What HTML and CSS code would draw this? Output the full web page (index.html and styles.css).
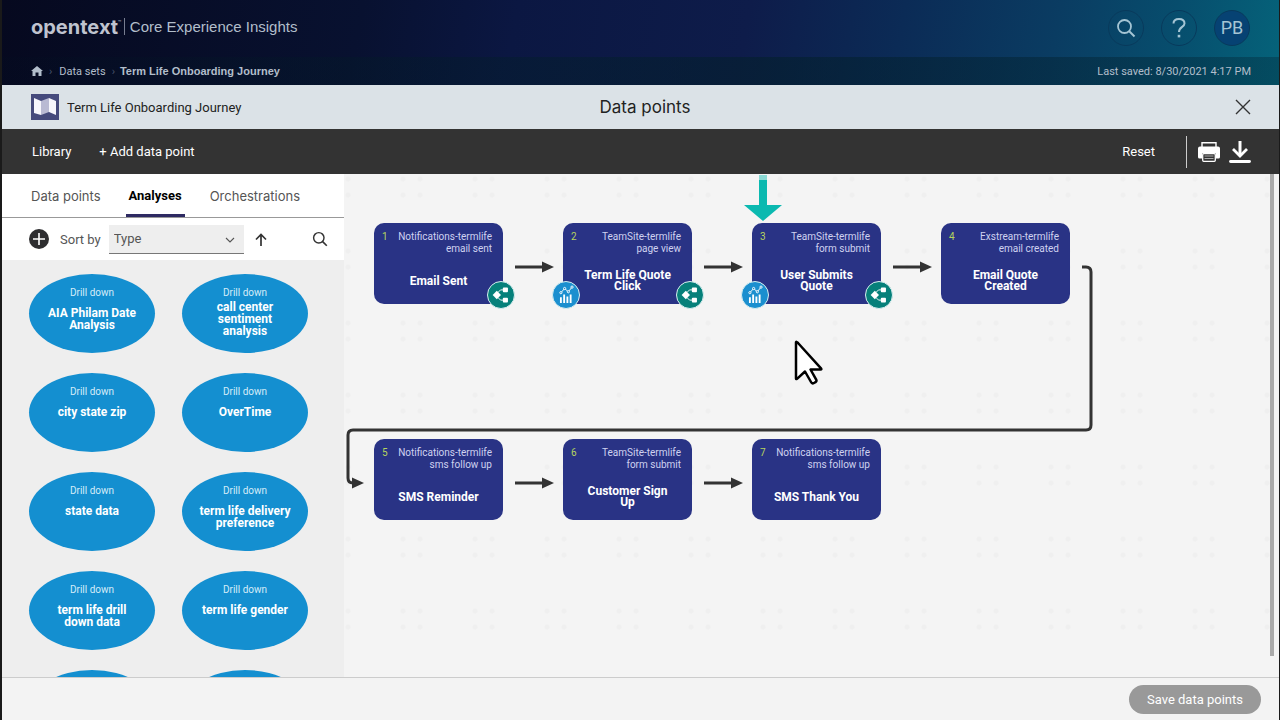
FILE: index.html
```html
<!DOCTYPE html>
<html lang="en">
<head>
<meta charset="utf-8">
<title>Core Experience Insights - Data points</title>
<link rel="stylesheet" href="styles.css">
</head>
<body>
<svg class="defs" aria-hidden="true">
  <symbol id="i-search" viewBox="0 0 20 20"><circle cx="8.500" cy="8.500" r="6.500" fill="none" stroke="currentColor" stroke-width="1.800"/><path d="M13 13l5.500 5.500" stroke="currentColor" stroke-width="2"/></symbol>
  <symbol id="i-flow" viewBox="0 0 28 28"><path d="M18 8.500h-4.500l-3 3M18 19.500h-4.500l-3-3" fill="none" stroke="#fff" stroke-width="1"/><path d="M9.500 9.500l4.500 4.500-4.500 4.500L5 14z" fill="#fff"/><rect x="16" y="6" width="5.500" height="5" rx="1" fill="#fff"/><rect x="16" y="17" width="5.500" height="5" rx="1" fill="#fff"/></symbol>
  <symbol id="i-chart" viewBox="0 0 28 28"><path d="M8.500 22.500v-6M12 22.500v-9M15.500 22.500v-7M19 22.500v-9" stroke="#fff" stroke-width="2"/><path d="M8.500 11.500l4-4.500 4 3.500 4-5" fill="none" stroke="#fff" stroke-width="1"/><g fill="#1b8fcf" stroke="#fff"><circle cx="8.500" cy="11.500" r="1.200"/><circle cx="12.500" cy="7" r="1.200"/><circle cx="16.500" cy="10.500" r="1.200"/><circle cx="20.500" cy="5.500" r="1.200"/></g></symbol>
</svg>
<div class="app">
  <header class="masthead">
    <div class="brandbar">
      <div class="brand"><span class="brand-name">opentext</span><span class="brand-tm">™</span><span class="brand-product">Core Experience Insights</span></div>
      <div class="account">
        <button class="round" type="button" aria-label="Search"><svg width="20" height="20"><use href="#i-search"/></svg></button>
        <button class="round" type="button" aria-label="Help"><svg width="16" height="22" viewBox="0 0 16 22" fill="none" stroke="currentColor" stroke-width="2"><path d="M2.500 6.500C2.500 3.500 5 2 8 2s5.500 1.500 5.500 4.500C13.500 10 8 10 8 15"/><path d="M8 17.800v2.600" stroke-width="2.600"/></svg></button>
        <button class="round round-user" type="button">PB</button>
      </div>
    </div>
    <div class="crumbbar">
      <nav class="crumbs" aria-label="Breadcrumb">
        <a href="#" aria-label="Home"><svg width="12" height="10" viewBox="0 0 12 10"><path d="M6 0l6 5h-1.500v5H7.500V6.500h-3V10h-3V5H0z" fill="currentColor"/></svg></a>
        <span class="sep">›</span>
        <a href="#">Data sets</a>
        <span class="sep">›</span>
        <strong>Term Life Onboarding Journey</strong>
      </nav>
      <span>Last saved: 8/30/2021 4:17 PM</span>
    </div>
  </header>

  <div class="titlebar">
    <div class="journey">
      <svg width="28" height="26" viewBox="0 0 28 26"><rect width="28" height="26" fill="#454a7c"/><path d="M3 4l7 3v14l-7-2z" fill="#f6f6fc"/><path d="M10 7l8-3v14l-8 3z" fill="#b9bad3"/><path d="M18 4l7 3v14l-7-3z" fill="#f6f6fc"/></svg>
      <span>Term Life Onboarding Journey</span>
    </div>
    <h1>Data points</h1>
    <button class="close" type="button" aria-label="Close"><svg width="16" height="16" viewBox="0 0 16 16" stroke="#333" stroke-width="1.400"><path d="M1 1l14 14M15 1L1 15"/></svg></button>
  </div>

  <div class="toolbar">
    <button type="button">Library</button>
    <button type="button">+ Add data point</button>
    <button class="reset" type="button">Reset</button>
    <div class="output">
      <button type="button" aria-label="Print"><svg width="22" height="20" viewBox="0 0 22 20"><path d="M4 5V.8h14V5" fill="none" stroke="#fff" stroke-width="1.400"/><path d="M2 4.500h18a2 2 0 0 1 2 2V15a1.500 1.500 0 0 1-1.500 1.500H18v-5H4v5H1.500A1.500 1.500 0 0 1 0 15V6.500a2 2 0 0 1 2-2z" fill="#fff"/><rect x="4.700" y="11.700" width="12.600" height="7.600" rx="1" fill="#333" stroke="#fff" stroke-width="1.300"/><path d="M6.500 14h9M6.500 16.500h9" stroke="#aaa"/></svg></button>
      <button type="button" aria-label="Download"><svg width="22" height="22" viewBox="0 0 22 22" fill="none" stroke="#fff"><path d="M11 0v15" stroke-width="3"/><path d="M4 8l7 7 7-7" stroke-width="2.800"/><path d="M1.500 20.500h19" stroke-width="2.800" stroke-linecap="round"/></svg></button>
    </div>
  </div>

  <main class="work">
    <aside class="library">
      <nav class="tabs">
        <button type="button">Data points</button>
        <button class="active" type="button">Analyses</button>
        <button type="button">Orchestrations</button>
      </nav>
      <div class="sortbar">
        <button type="button" aria-label="Add analysis"><svg width="20" height="20" viewBox="0 0 20 20"><circle cx="10" cy="10" r="10" fill="#2d2d2f"/><path d="M10 4v12M4 10h12" stroke="#fff" stroke-width="1.600"/></svg></button>
        <label for="sort">Sort by</label>
        <div class="select">
          <select id="sort"><option>Type</option></select>
          <svg width="10" height="6" viewBox="0 0 10 6" fill="none" stroke="#555" stroke-width="1.100"><path d="M1 1l4 4 4-4"/></svg>
        </div>
        <button type="button" aria-label="Ascending"><svg width="12" height="13" viewBox="0 0 12 13" fill="none" stroke="#333" stroke-width="1.700"><path d="M6 13V1.500M1 6.500l5-5 5 5"/></svg></button>
        <button class="find" type="button" aria-label="Search analyses"><svg width="16" height="16"><use href="#i-search"/></svg></button>
      </div>
      <div class="bubbles">
        <div class="bubble"><small>Drill down</small><b>AIA Philam Date Analysis</b></div>
        <div class="bubble bubble-long"><small>Drill down</small><b>call center sentiment analysis</b></div>
        <div class="bubble"><small>Drill down</small><b>city state zip</b></div>
        <div class="bubble"><small>Drill down</small><b>OverTime</b></div>
        <div class="bubble"><small>Drill down</small><b>state data</b></div>
        <div class="bubble"><small>Drill down</small><b>term life delivery preference</b></div>
        <div class="bubble"><small>Drill down</small><b>term life drill down data</b></div>
        <div class="bubble"><small>Drill down</small><b>term life gender</b></div>
        <div class="bubble"></div>
        <div class="bubble"></div>
      </div>
    </aside>

    <section class="canvas" aria-label="Journey">
      <svg class="links" width="760" height="330" viewBox="0 0 760 330" fill="none" stroke="#333" stroke-width="3">
        <path d="M171 93h28M360 93h28M549 93h28M171 309h28M360 309h28"/>
        <path d="M738 93h4q5 0 5 5v153q0 5-5 5H9q-5 0-5 5v43q0 5 5 5h3"/>
        <g fill="#333" stroke="none"><path id="head" d="M198 87.500v11l12-5.500z"/><use href="#head" x="189"/><use href="#head" x="378"/><use href="#head" y="216"/><use href="#head" x="189" y="216"/><use href="#head" x="-190" y="216"/></g>
      </svg>
      <article class="node col1 row1"><i>1</i><span>Notifications-termlife<br>email sent</span><b>Email Sent</b><svg class="badge flow"><use href="#i-flow"/></svg></article>
      <article class="node col2 row1"><i>2</i><span>TeamSite-termlife<br>page view</span><b>Term Life Quote Click</b><svg class="badge chart"><use href="#i-chart"/></svg><svg class="badge flow"><use href="#i-flow"/></svg></article>
      <article class="node col3 row1"><i>3</i><span>TeamSite-termlife<br>form submit</span><b>User Submits Quote</b><svg class="badge chart"><use href="#i-chart"/></svg><svg class="badge flow"><use href="#i-flow"/></svg></article>
      <article class="node col4 row1"><i>4</i><span>Exstream-termlife<br>email created</span><b>Email Quote Created</b></article>
      <article class="node col1 row2"><i>5</i><span>Notifications-termlife<br>sms follow up</span><b>SMS Reminder</b></article>
      <article class="node col2 row2"><i>6</i><span>TeamSite-termlife<br>form submit</span><b>Customer Sign Up</b></article>
      <article class="node col3 row2"><i>7</i><span>Notifications-termlife<br>sms follow up</span><b>SMS Thank You</b></article>
      <svg class="marker" width="38" height="46" viewBox="0 0 38 46"><path d="M15 0h8v5h-8z" fill="#8ad9d4"/><path d="M15 5h8v25h15L19 46 0 30h15z" fill="#0bb9b0"/></svg>
      <svg class="pointer" width="32" height="46" viewBox="0 0 32 46"><path d="M3 2.500v36q0 1 1 .3l8-7.300 6 10.500q1 2 3 1l1.500-.8q1.500-1 .7-2.500L17.500 29.500h10q1.500 0 .5-1.200L5 3Q3 1 3 2.500z" fill="#fff" stroke="#000" stroke-width="2.500" stroke-linejoin="round"/></svg>
      <div class="scroll"></div>
    </section>
  </main>

  <footer class="actions"><button type="button">Save data points</button></footer>
</div>
</body>
</html>
```

FILE: styles.css
```css
* { box-sizing: border-box; }
body { margin: 0; font-family: Roboto, "Liberation Sans", sans-serif; font-size: 13px; color: #333; background: #1a1a1a; }
button { border: 0; padding: 0; background: none; font: inherit; color: inherit; display: flex; align-items: center; justify-content: center; }
svg { display: block; }
.defs { display: none; }
.app { height: 100vh; display: flex; flex-direction: column; margin: 0 1px 0 2px; background: #f4f4f4; overflow: hidden; }

.masthead { color: #b2becb; background: linear-gradient(100deg, #06091f 0%, #081130 28%, #0b1742 40%, #0e1c4a 58%, #0b2b56 70%, #0a3c62 82%, #074d6d 91%, #05637a 100%); }
.brandbar { height: 57px; padding: 0 29px 2px 29px; display: flex; align-items: center; justify-content: space-between; }
.brand { display: flex; align-items: center; padding-bottom: 2px; line-height: 20px; }
.brand-name { font: 700 20px/20px Inter, sans-serif; color: #bfc3cf; }
.brand-tm { font-size: 6px; line-height: 10px; align-self: flex-start; }
.brand-product { margin-left: 2px; padding-left: 5px; border-left: 1px solid #777d90; font: 400 15px/17px "Liberation Sans", sans-serif; }
.account { display: flex; gap: 17px; }
.round { width: 36px; height: 36px; border-radius: 50%; border: 1px solid #083a5c; color: #a5c5d4; }
.round-user { background: #064273; font-size: 18px; }
.crumbbar { height: 28px; padding: 0 28px 0 29px; display: flex; align-items: center; justify-content: space-between; font-size: 11px; background: linear-gradient(90deg, #02102222, #02202888 60%, #02203055); }
.crumbs { display: flex; align-items: center; gap: 6px; }
.crumbs a { color: inherit; text-decoration: none; }
.crumbs strong { margin-left: -2px; font-family: "Liberation Sans", sans-serif; }
.crumbs .sep { color: #47536b; padding-right: 1px; }

.titlebar { height: 44px; padding: 0 28px 0 29px; display: grid; grid-template-columns: 1fr auto 1fr; align-items: center; background: #dbe2e7; color: #222; }
.journey { display: flex; align-items: center; gap: 8px; }
.titlebar h1 { margin: 0 0 0 8px; font: 400 17px/20px Inter, sans-serif; }
.close { justify-self: end; }

.toolbar { height: 45px; padding: 0 28px 0 30px; display: flex; align-items: center; gap: 28px; background: #333; color: #fff; }
.reset { margin-left: auto; margin-right: 3px; }
.output { display: flex; align-items: center; gap: 9px; height: 32px; padding-left: 11px; border-left: 1px solid #ccc; }

.work { flex: 1; min-height: 0; display: flex; }
.library { width: 342px; flex: none; overflow: hidden; background: #eee; }
.tabs { height: 44px; padding: 0 26px; display: flex; gap: 22px; background: #fff; border-bottom: 1px solid #999; font: 400 13px/16px Inter, sans-serif; color: #555; }
.tabs button { padding: 3px 3px 0; border-bottom: 3px solid transparent; }
.tabs .active { border-color: #2e2a62; color: #000; font-family: Roboto, sans-serif; font-weight: 700; }
.sortbar { height: 42px; padding: 0 16px 0 27px; display: flex; align-items: center; background: #fff; color: #555; }
.sortbar label { margin: 0 8px 0 11px; font-size: 13px; }
.select { position: relative; width: 135px; margin-right: 11px; }
.select select { width: 100%; height: 29px; padding: 0 5px; appearance: none; border: 0; border-bottom: 1px solid #777; border-radius: 0; background: #eee; font: inherit; color: #555; }
.select svg { position: absolute; right: 9px; top: 12px; }
.find { margin-left: auto; color: #333; }
.bubbles { padding: 14px 27px; display: grid; grid-template-columns: 126px 126px; gap: 20px 27px; }
.bubble { height: 79px; padding: 13px 15px 0; border-radius: 50%; background: #148fd0; color: #fff; text-align: center; display: flex; flex-direction: column; gap: 8px; }
.bubble-long { gap: 2px; padding-left: 30px; padding-right: 30px; }
.bubble small { font-size: 10px; line-height: 12px; color: #d5ecf8; }
.bubble b { font-size: 12px; line-height: 12px; }

.canvas { flex: 1; position: relative; overflow: hidden; background-image: radial-gradient(circle, #efefef 2px, transparent 3px), radial-gradient(circle, #efefef 2px, transparent 3px), radial-gradient(circle, #efefef 2px, transparent 3px), radial-gradient(circle, #efefef 2px, transparent 3px); background-size: 72px 72px; background-position: 23px 41px, 40px 41px, 23px 57px, 40px 57px; }
.links { position: absolute; left: 0; top: 0; }
.node { position: absolute; width: 129px; height: 81px; padding: 8px 11px 8px 8px; border-radius: 10px; background: #293385; color: #fff; display: grid; grid-template-columns: auto 1fr; grid-template-rows: 24px 1fr; font-size: 10px; line-height: 12px; }
.node i { font-style: normal; color: #b5d45e; }
.node span { text-align: right; color: #cfd2f0; }
.node > b { grid-column: 1 / -1; align-self: center; text-align: center; font-size: 12px; line-height: 11px; padding: 11px 6px 0 9px; }
.row1 { top: 49px; }
.row2 { top: 265px; }
.col1 { left: 30px; }
.col2 { left: 219px; }
.col3 { left: 408px; }
.col4 { left: 597px; }
.badge { position: absolute; bottom: -5px; width: 28px; height: 28px; border-radius: 50%; border: 1px solid #d8eef0; }
.flow { right: -12px; background: #06807a; }
.chart { left: -11px; background: #1b8fcf; }
.marker { position: absolute; left: 400px; top: 1px; }
.pointer { position: absolute; left: 449px; top: 166px; }
.scroll { position: absolute; right: 5px; top: 0; bottom: 21px; width: 4px; background: #aaa; }

.actions { height: 43px; padding: 0 18px; display: flex; align-items: center; justify-content: flex-end; border-top: 1px solid #ccc; background: #f3f3f3; }
.actions button { height: 29px; padding: 0 18px; border-radius: 15px; background: #999; color: #fff; }
```
